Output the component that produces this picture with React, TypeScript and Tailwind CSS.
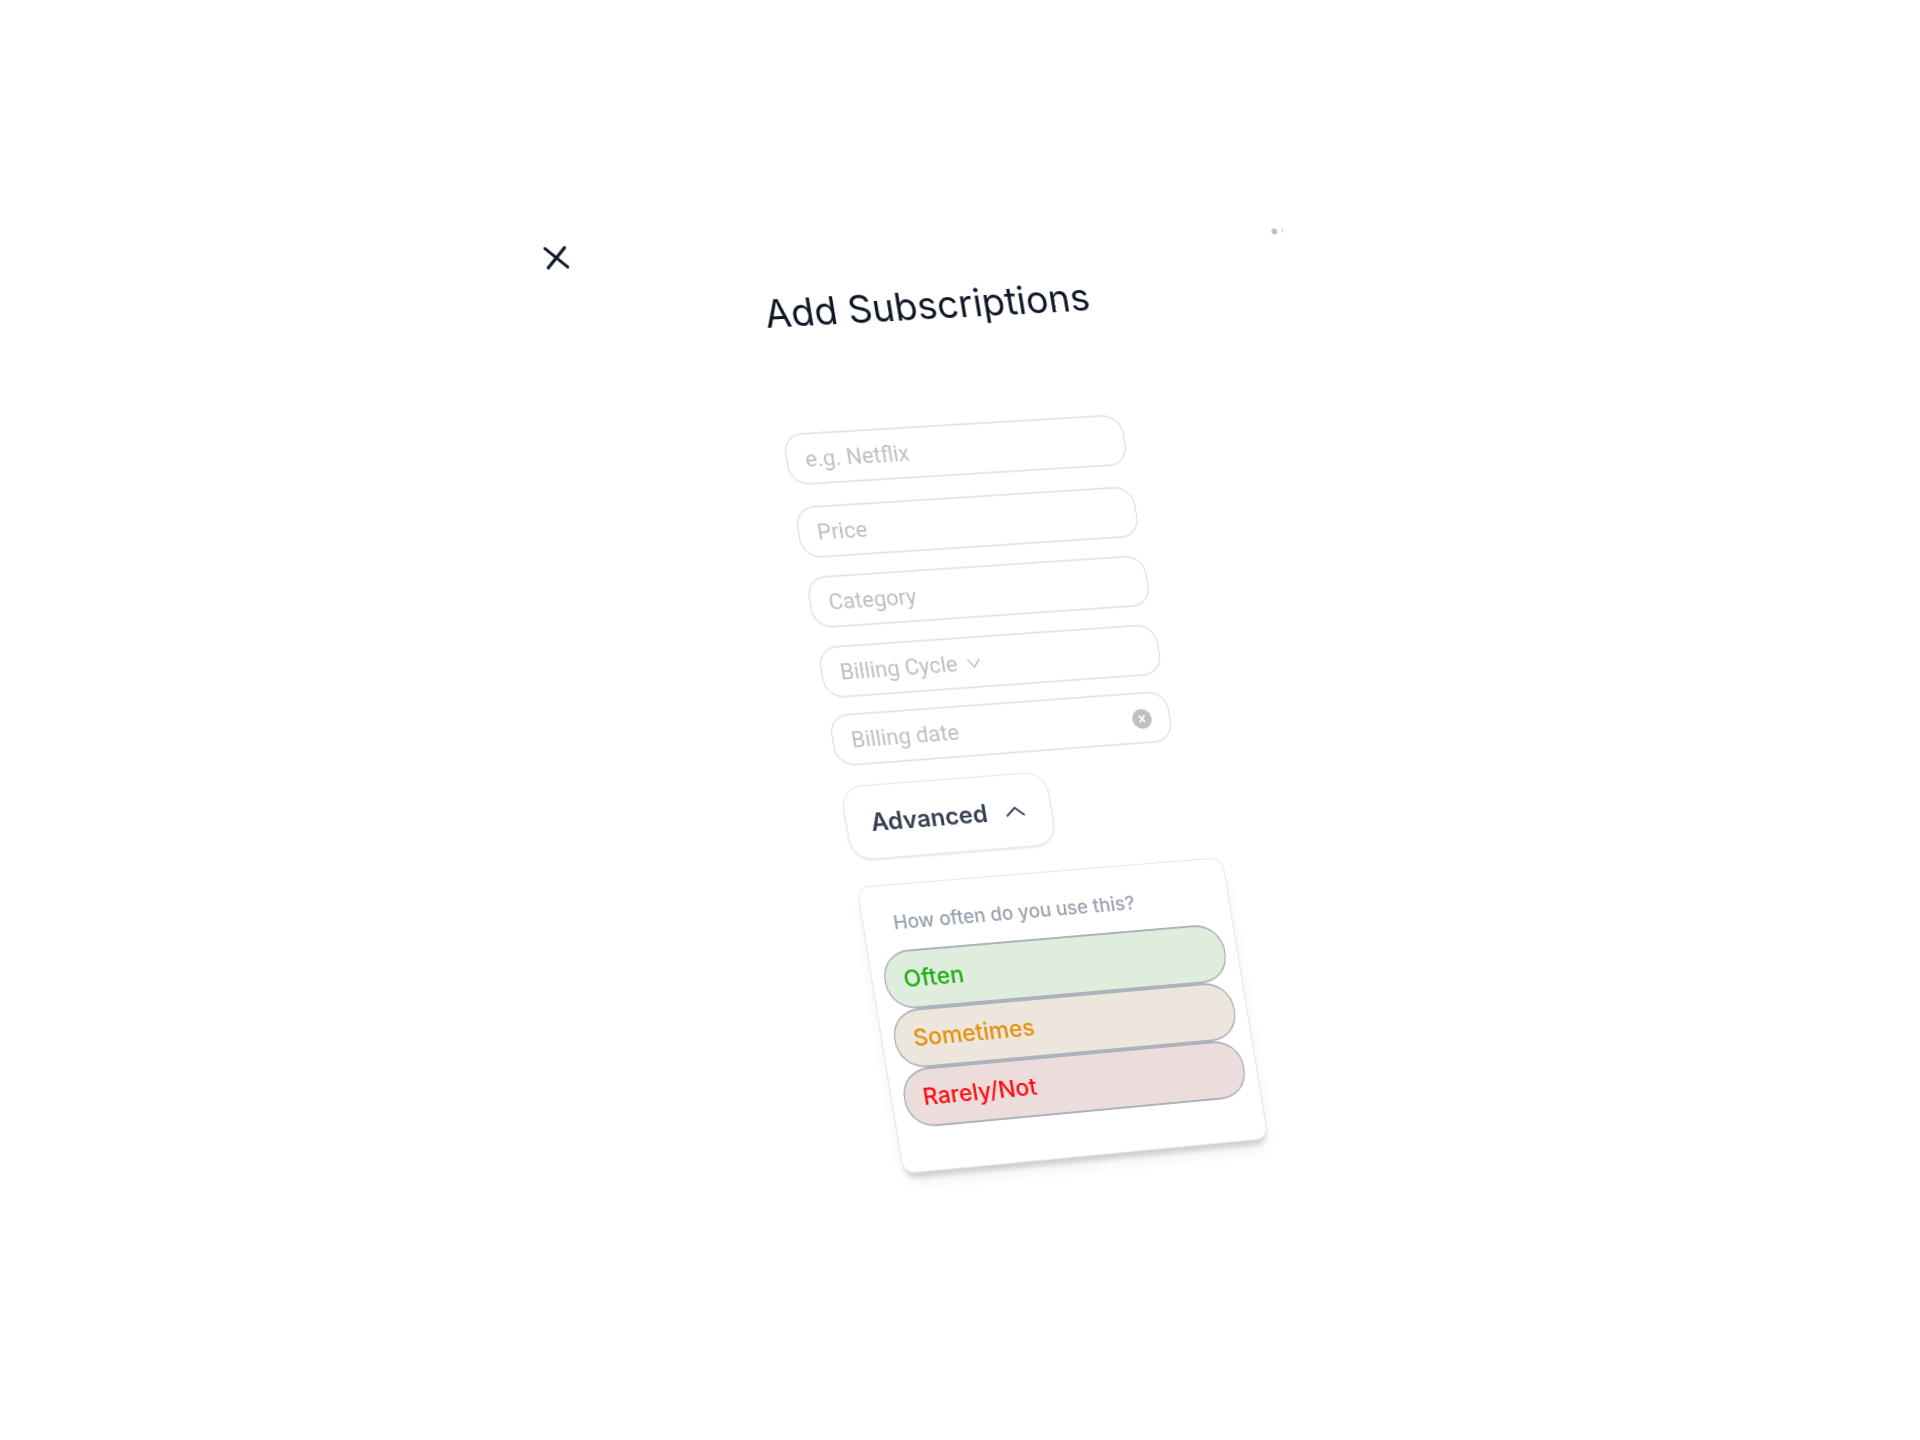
import { X } from "lucide-react";

const fieldBox =
  "flex h-[52px] w-[344px] items-center rounded-[20px] border-x border-y-2 border-x-[#d9d9d9] border-y-[#e6e6e6] px-[18px] pt-px font-[Roboto,sans-serif] text-[22px] leading-7";
const fieldText =
  "min-w-0 flex-1 bg-transparent text-[#bfbfbf] outline-none placeholder:text-[#bfbfbf]";

const answers = [
  { label: "Often", tone: "bg-[#dfeddd] text-[#1fae10]" },
  { label: "Sometimes", tone: "bg-[#ede6dc] text-[#e58f0c]" },
  { label: "Rarely/Not", tone: "bg-[#ecdcdc] text-[#ff0c12]" },
];

function Header() {
  return (
    <header>
      <div className="flex items-start justify-between pt-3 pl-px">
        <button type="button" aria-label="Close" className="text-gray-900">
          <X size={38} strokeWidth={2} />
        </button>
        <div className="mt-[26px] flex w-3 gap-[5px] overflow-hidden" aria-hidden="true">
          <span className="size-1.5 shrink-0 rounded-full bg-[#bfbfbf]" />
          <span className="size-1.5 shrink-0 rounded-full bg-[#bfbfbf]" />
        </div>
      </div>
      <h1 className="mt-[23px] pl-1 text-center text-[38px] leading-[48px] text-gray-900">
        Add Subscriptions
      </h1>
    </header>
  );
}

function Fields() {
  return (
    <div className="flex flex-col items-start">
      <div className={fieldBox}>
        <input aria-label="Name" placeholder="e.g. Netflix" className={fieldText} />
      </div>
      <div className={`${fieldBox} mt-[21px]`}>
        <input aria-label="Price" placeholder="Price" className={fieldText} />
      </div>
      <div className={`${fieldBox} mt-[18px]`}>
        <input aria-label="Category" placeholder="Category" className={fieldText} />
      </div>
      <div className={`${fieldBox} mt-[18px] gap-1.5`}>
        <select
          aria-label="Billing cycle"
          className="appearance-none bg-transparent text-[#bfbfbf] outline-none"
        >
          <option>Billing Cycle</option>
          <option>Monthly</option>
          <option>Yearly</option>
        </select>
        <svg viewBox="0 0 20 20" className="size-5 text-[#bfbfbf]" fill="none" stroke="currentColor" strokeWidth="1.5" aria-hidden="true">
          <path d="M4 6l6 8 6-8" />
        </svg>
      </div>
      <div className={`${fieldBox} mt-4`}>
        <input aria-label="Billing date" placeholder="Billing date" className={fieldText} />
        <button type="button" aria-label="Clear billing date">
          <svg viewBox="0 0 20 20" className="size-5" aria-hidden="true">
            <circle cx="10" cy="10" r="10" fill="#bfbfbf" />
            <path d="M7 6.5l6 7M13 6.5l-6 7" stroke="#fff" strokeWidth="1.7" />
          </svg>
        </button>
      </div>
    </div>
  );
}

function UsageCard() {
  return (
    <section className="mt-[26px] w-[374px] rounded-xl border border-gray-200 bg-white px-3 pt-6 pb-[43px] shadow-[0_12px_16px_-4px_rgba(0,0,0,0.07),0_7px_5px_-2px_rgba(0,0,0,0.14)]">
      <h2 className="pl-[18px] text-[19px] leading-7 font-medium text-gray-400">
        How often do you use this?
      </h2>
      <div className="mt-[13px] flex flex-col">
        {answers.map(({ label, tone }) => (
          <button
            key={label}
            type="button"
            className={`h-[59px] rounded-[28px] border-x border-y-2 border-x-gray-400 border-y-[#adb3bd] px-[18px] text-left text-[23px] font-medium ${tone}`}
          >
            {label}
          </button>
        ))}
      </div>
    </section>
  );
}

export default function App() {
  return (
    <main className="flex min-h-screen justify-center overflow-hidden bg-white pt-[217px] font-[Inter,sans-serif]">
      <div className="w-[756px] origin-[213px_217px] -translate-x-[13px] [transform:matrix3d(1,-0.0595,0,0.0000486,0.164,1,0,0,0,0,1,0,0,0,0,1)]">
        <Header />
        <form className="mt-24 pl-[213px]">
          <Fields />
          <button
            type="button"
            className="mt-5 flex h-[74px] items-center gap-4 rounded-[22px] border border-gray-200 bg-white px-6 pt-px text-[24px] font-semibold text-gray-700 shadow-sm"
          >
            Advanced
            <svg viewBox="0 0 24 24" className="size-6" fill="none" stroke="currentColor" strokeWidth="1.7" aria-hidden="true">
              <path d="M3 16l9-8 9 8" />
            </svg>
          </button>
          <UsageCard />
        </form>
      </div>
    </main>
  );
}
